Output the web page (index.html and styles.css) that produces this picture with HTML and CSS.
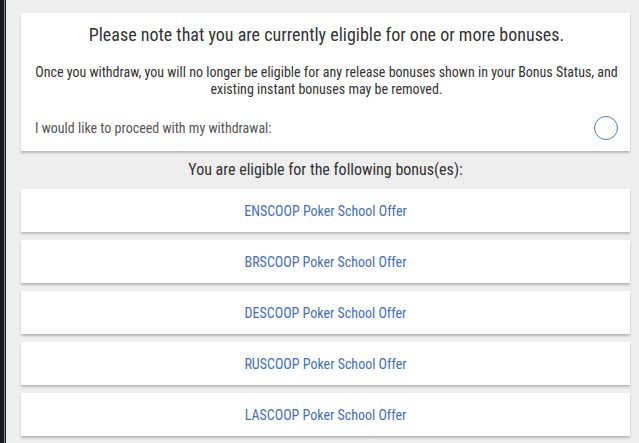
FILE: index.html
```html
<!DOCTYPE html>
<html>
<head>
<meta charset="utf-8">
<link rel="stylesheet" href="styles.css">
</head>
<body>
<div class="frame">
  <div class="edge"></div>
  <main class="content">
    <section class="card notice">
      <h1 class="notice-title">Please note that you are currently eligible for one or more bonuses.</h1>
      <p class="notice-text">Once you withdraw, you will no longer be eligible for any release bonuses shown in your Bonus Status, and existing instant bonuses may be removed.</p>
      <div class="confirm-row">
        <span class="confirm-label">I would like to proceed with my withdrawal:</span>
        <span class="radio"></span>
      </div>
    </section>
    <h2 class="list-title">You are eligible for the following bonus(es):</h2>
    <ul class="bonus-list">
      <li class="card bonus">ENSCOOP Poker School Offer</li>
      <li class="card bonus">BRSCOOP Poker School Offer</li>
      <li class="card bonus">DESCOOP Poker School Offer</li>
      <li class="card bonus">RUSCOOP Poker School Offer</li>
      <li class="card bonus">LASCOOP Poker School Offer</li>
    </ul>
  </main>
</div>
</body>
</html>
```
FILE: styles.css
```css
html, body {
  margin: 0;
  padding: 0;
  height: 100%;
  background: #eeeeee;
  overflow: hidden;
}
body {
  font-family: Roboto, "Liberation Sans", sans-serif;
  font-stretch: 75%;
  color: #333333;
}
.frame {
  display: flex;
  height: 100%;
}
.edge {
  flex: 0 0 6px;
  background: linear-gradient(to right, #15191d 0, #15191d 4px, #8d9194 4px, #8d9194 5px, #15191d 5px);
}
.content {
  flex: 0 0 609px;
  margin-left: 15px;
  padding-top: 13px;
}
.card {
  background: #ffffff;
  box-shadow: 0 2px 2px rgba(0, 0, 0, 0.22);
}
.notice {
  height: 138px;
  box-sizing: border-box;
  padding: 10px 12px 0 14px;
}
.notice-title {
  margin: 0;
  font-size: 18px;
  line-height: 24px;
  font-weight: 400;
  text-align: center;
  color: #333333;
}
.notice-text {
  margin: 17px 0 0;
  font-size: 14px;
  line-height: 17px;
  text-align: center;
  color: #333333;
}
.confirm-row {
  margin-top: 18px;
  display: flex;
  align-items: center;
  justify-content: space-between;
}
.confirm-label {
  font-size: 14px;
  line-height: 24px;
  color: #555555;
}
.radio {
  width: 24px;
  height: 24px;
  box-sizing: border-box;
  border: 1px solid #4f7cc6;
  border-radius: 50%;
}
.list-title {
  margin: 8px 0;
  font-size: 16px;
  line-height: 22px;
  font-weight: 400;
  text-align: center;
  color: #333333;
}
.bonus-list {
  list-style: none;
  margin: 0;
  padding: 0;
  display: flex;
  flex-direction: column;
  gap: 8px;
}
.bonus {
  height: 43px;
  display: flex;
  align-items: center;
  justify-content: center;
  font-size: 14px;
  color: #3f6fc0;
}
```
